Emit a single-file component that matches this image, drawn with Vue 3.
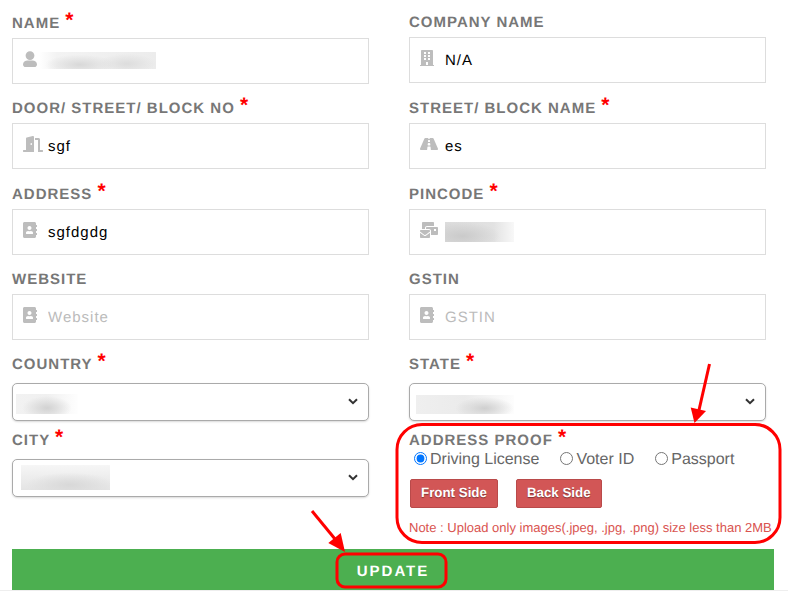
<script setup>
const icons = {
  user: { box: '0 0 14 16', w: 14, d: 'M7 0.2a4.4 4.4 0 1 1 0 8.8a4.4 4.4 0 1 1 0-8.8zM0 13.4C0 11 2.2 9.4 4.6 9.4h4.8C11.8 9.4 14 11 14 13.4c0 1.5-1.1 2.6-2.6 2.6H2.6C1.1 16 0 14.9 0 13.4z' },
  door: { box: '0 0 640 512', w: 20, d: 'M624 448h-80V113.45C544 86.19 522.47 64 496 64H384v64h96v384h144c8.84 0 16-7.16 16-16v-32c0-8.84-7.16-16-16-16zM312.24 1.01l-192 49.74C105.99 54.44 96 67.7 96 82.92V448H16c-8.84 0-16 7.16-16 16v32c0 8.84 7.16 16 16 16h336V33.18c0-21.58-19.56-37.41-39.76-32.17zM264 288c-13.25 0-24-14.33-24-32s10.75-32 24-32 24 14.33 24 32-10.75 32-24 32z' },
  book: { box: '0 0 448 512', w: 14, d: 'M436 160c6.6 0 12-5.4 12-12v-40c0-6.6-5.4-12-12-12h-20V48c0-26.5-21.5-48-48-48H48C21.5 0 0 21.5 0 48v416c0 26.5 21.5 48 48 48h320c26.5 0 48-21.5 48-48v-48h20c6.6 0 12-5.4 12-12v-40c0-6.6-5.4-12-12-12h-20v-64h20c6.6 0 12-5.4 12-12v-40c0-6.6-5.4-12-12-12h-20v-64h20zm-228-32c35.3 0 64 28.7 64 64s-28.7 64-64 64-64-28.7-64-64 28.7-64 64-64zm112 236.8c0 10.6-10 19.2-22.4 19.2H118.4C106 384 96 375.4 96 364.8v-19.2c0-31.8 30.1-57.6 67.2-57.6h5c12.3 5.1 25.7 8 39.8 8s27.6-2.9 39.8-8h5c37.1 0 67.2 25.8 67.2 57.6v19.2z' },
  building: { box: '0 0 448 512', w: 14, d: 'M436 480h-20V24c0-13.255-10.745-24-24-24H56C42.745 0 32 10.745 32 24v456H12c-6.627 0-12 5.373-12 12v20h448v-20c0-6.627-5.373-12-12-12zM128 76c0-6.627 5.373-12 12-12h40c6.627 0 12 5.373 12 12v40c0 6.627-5.373 12-12 12h-40c-6.627 0-12-5.373-12-12V76zm0 96c0-6.627 5.373-12 12-12h40c6.627 0 12 5.373 12 12v40c0 6.627-5.373 12-12 12h-40c-6.627 0-12-5.373-12-12v-40zm52 148h-40c-6.627 0-12-5.373-12-12v-40c0-6.627 5.373-12 12-12h40c6.627 0 12 5.373 12 12v40c0 6.627-5.373 12-12 12zm76 160h-64v-84c0-6.627 5.373-12 12-12h40c6.627 0 12 5.373 12 12v84zm64-172c0 6.627-5.373 12-12 12h-40c-6.627 0-12-5.373-12-12v-40c0-6.627 5.373-12 12-12h40c6.627 0 12 5.373 12 12v40zm0-96c0 6.627-5.373 12-12 12h-40c-6.627 0-12-5.373-12-12v-40c0-6.627 5.373-12 12-12h40c6.627 0 12 5.373 12 12v40zm0-96c0 6.627-5.373 12-12 12h-40c-6.627 0-12-5.373-12-12V76c0-6.627 5.373-12 12-12h40c6.627 0 12 5.373 12 12v40z' },
  road: { box: '0 0 576 512', w: 18, d: 'M573.19 402.67l-139.79-320C428.43 71.29 417.6 64 405.68 64h-97.59l2.45 23.16c.5 4.72-3.21 8.84-7.96 8.84h-29.16c-4.75 0-8.46-4.12-7.96-8.84L267.91 64h-97.59c-11.93 0-22.76 7.29-27.73 18.67L2.8 402.67C-6.45 423.86 8.31 448 30.54 448h196.84l10.31-97.68c.86-8.14 7.72-14.32 15.91-14.32h68.8c8.19 0 15.05 6.18 15.91 14.32L348.62 448h196.84c22.23 0 36.99-24.14 27.73-45.33zM260.4 135.16a8 8 0 0 1 7.96-7.16h39.29c4.09 0 7.53 3.09 7.96 7.16l4.6 43.58c.75 7.09-4.81 13.26-11.93 13.26h-40.54c-7.13 0-12.68-6.17-11.93-13.26l4.6-43.58zM315.64 304h-55.29c-9.5 0-16.91-8.23-15.91-17.68l5.07-48c.86-8.14 7.72-14.32 15.91-14.32h45.15c8.19 0 15.05 6.18 15.91 14.32l5.07 48c1 9.45-6.41 17.68-15.91 17.68z' },
  mail: { box: '0 0 576 512', w: 18, d: 'M160 448c-25.6 0-51.2-22.4-64-32-64-44.8-83.2-60.8-96-70.4V480c0 17.67 14.33 32 32 32h256c17.67 0 32-14.33 32-32V345.6c-12.8 9.6-32 25.6-96 70.4-12.8 9.6-38.4 32-64 32zm128-192H32c-17.67 0-32 14.33-32 32v16c25.6 19.2 22.4 19.2 115.2 86.4 9.6 6.4 28.8 25.6 44.8 25.6s35.2-19.2 44.8-22.4c92.8-67.2 89.6-67.2 115.2-86.4V288c0-17.67-14.33-32-32-32zm256-96H224c-17.67 0-32 14.33-32 32v32h96c33.21 0 60.59 25.42 63.71 57.82l.29-.22V416h192c17.67 0 32-14.33 32-32V192c0-17.67-14.33-32-32-32zm-32 128h-64v-64h64v64zm-352-96c0-35.29 28.71-64 64-64h224V32c0-17.67-14.33-32-32-32H96C78.33 0 64 14.33 64 32v192h96v-32z' }
}
const leftFields = [
  { label: 'NAME', req: true, icon: 'user', value: '', blur: 'blur-name' },
  { label: 'DOOR/ STREET/ BLOCK NO', req: true, icon: 'door', value: 'sgf' },
  { label: 'ADDRESS', req: true, icon: 'book', value: 'sgfdgdg' },
  { label: 'WEBSITE', icon: 'book', value: '', placeholder: 'Website' }
]
const rightFields = [
  { label: 'COMPANY NAME', icon: 'building', value: 'N/A' },
  { label: 'STREET/ BLOCK NAME', req: true, icon: 'road', value: 'es' },
  { label: 'PINCODE', req: true, icon: 'mail', value: '', blur: 'blur-pin' },
  { label: 'GSTIN', icon: 'book', value: '', placeholder: 'GSTIN' }
]
</script>

<template>
  <div class="page">
    <div class="columns">
      <div class="col">
        <div v-for="f in leftFields" :key="f.label" class="field">
          <div class="label">{{ f.label }} <span v-if="f.req" class="req">*</span></div>
          <div class="box">
            <svg class="icon" :viewBox="icons[f.icon].box" :width="icons[f.icon].w" height="16"><path :d="icons[f.icon].d" /></svg>
            <input class="input" type="text" :value="f.value" :placeholder="f.placeholder" />
            <div v-if="f.blur" class="blur" :class="f.blur"></div>
          </div>
        </div>
        <div class="label label-sel first-sel">COUNTRY <span class="req">*</span></div>
        <div class="sel-wrap">
          <select class="sel"><option></option></select>
          <svg class="chev" width="10" height="7" viewBox="0 0 10 7"><path d="M1 1.2 L5 5.2 L9 1.2" /></svg>
          <div class="blur blur-country"></div>
        </div>
        <div class="label label-sel">CITY <span class="req">*</span></div>
        <div class="sel-wrap">
          <select class="sel"><option></option></select>
          <svg class="chev" width="10" height="7" viewBox="0 0 10 7"><path d="M1 1.2 L5 5.2 L9 1.2" /></svg>
          <div class="blur blur-city"></div>
        </div>
      </div>
      <div class="col col-right">
        <div v-for="f in rightFields" :key="f.label" class="field">
          <div class="label">{{ f.label }} <span v-if="f.req" class="req">*</span></div>
          <div class="box">
            <svg class="icon" :viewBox="icons[f.icon].box" :width="icons[f.icon].w" height="16"><path :d="icons[f.icon].d" /></svg>
            <input class="input" type="text" :value="f.value" :placeholder="f.placeholder" />
            <div v-if="f.blur" class="blur" :class="f.blur"></div>
          </div>
        </div>
        <div class="label label-sel first-sel">STATE <span class="req">*</span></div>
        <div class="sel-wrap">
          <select class="sel"><option></option></select>
          <svg class="chev" width="10" height="7" viewBox="0 0 10 7"><path d="M1 1.2 L5 5.2 L9 1.2" /></svg>
          <div class="blur blur-state"></div>
        </div>
        <div class="label proof-label">ADDRESS PROOF <span class="req">*</span></div>
        <div class="radios">
          <label class="radio"><input type="radio" name="proof" checked />Driving License</label>
          <label class="radio"><input type="radio" name="proof" />Voter ID</label>
          <label class="radio"><input type="radio" name="proof" />Passport</label>
        </div>
        <div class="uploads">
          <button class="upload" type="button">Front Side</button>
          <button class="upload" type="button">Back Side</button>
        </div>
        <p class="note">Note : Upload only images(.jpeg, .jpg, .png) size less than 2MB</p>
      </div>
    </div>
    <button class="update" type="button">UPDATE</button>
    <div class="rule"></div>
    <svg class="marks" width="788" height="591" viewBox="0 0 788 591" fill="none">
      <rect x="397" y="424.5" width="383" height="118" rx="25" stroke="#f00" stroke-width="3" />
      <rect x="337" y="554" width="109" height="33" rx="8" stroke="#f00" stroke-width="3" />
      <path d="M709.5 364 L699 410" stroke="#f00" stroke-width="3" />
      <path d="M690.7 407.5 L706 411 L694.5 423 Z" fill="#f00" />
      <path d="M312 511 L335 539" stroke="#f00" stroke-width="3" />
      <path d="M328.3 543 L340.7 533 L345 552 Z" fill="#f00" />
    </svg>
  </div>
</template>

<style>
html, body { margin: 0; overflow: hidden; background: #fff; }
</style>

<style scoped>
.page {
  position: relative;
  width: 788px;
  height: 591px;
  overflow: hidden;
  font-family: "Liberation Sans", Arial, sans-serif;
  text-rendering: geometricPrecision;
}
.columns {
  display: flex;
  gap: 40px;
  padding: 0 12px;
  height: 549px;
}
.col { width: 357px; }
.col-right { margin-top: -0.1px; }
.field { margin-bottom: 2.1px; }
.label {
  display: flex;
  align-items: flex-end;
  height: 37.5px;
  box-sizing: border-box;
  padding-bottom: 6px;
  font-size: 15px;
  line-height: 17px;
  font-weight: 700;
  letter-spacing: 1px;
  color: #777;
  white-space: pre;
}
.req {
  position: relative;
  top: -3px;
  color: #f00;
  font-size: 21px;
  line-height: 17px;
  letter-spacing: 0;
}
.label-sel { height: 38px; padding-bottom: 10px; }
.first-sel { height: 40.6px; }
.box { position: relative; height: 46px; }
.input {
  display: block;
  width: 100%;
  height: 46px;
  box-sizing: border-box;
  border: 1px solid #ddd;
  padding: 1px 10px 0 35px;
  outline: none;
  background: #fff;
  font: 15px "Liberation Sans", Arial, sans-serif;
  letter-spacing: 1px;
  color: #000;
  text-rendering: geometricPrecision;
}
.input::placeholder { color: #bbb; opacity: 1; }
.icon {
  position: absolute;
  left: 11px;
  top: 13px;
  fill: #bdbdbd;
}
.blur { position: absolute; pointer-events: none; }
.blur-name {
  left: 27px; top: 14px; width: 117px; height: 17px;
  background:
    radial-gradient(ellipse 30% 60% at 35% 75%, #d8d8d8, transparent),
    radial-gradient(ellipse 25% 60% at 75% 70%, #dcdcdc, transparent),
    linear-gradient(90deg, #fff 0%, #f3f3f3 15%, #ececec 100%);
}
.blur-pin {
  left: 36px; top: 13px; width: 69px; height: 20px;
  background:
    radial-gradient(ellipse 55% 70% at 25% 70%, #cacaca, transparent),
    linear-gradient(90deg, #dcdcdc 0%, #e2e2e2 70%, #f8f8f8 100%);
}
.sel-wrap { position: relative; height: 38px; }
.sel {
  display: block;
  appearance: none;
  width: 100%;
  height: 38px;
  box-sizing: border-box;
  border: 1px solid #aaa;
  border-radius: 5px;
  background-color: #fff;
  box-shadow: 0 1px 2px rgba(0, 0, 0, 0.15);
  font: 15px "Liberation Sans", Arial, sans-serif;
  outline: none;
}
.chev {
  position: absolute;
  left: 336px;
  top: 15px;
  fill: none;
  stroke: #333;
  stroke-width: 2;
  pointer-events: none;
}
.blur-country {
  left: 4px; top: 11px; width: 62px; height: 20px;
  background:
    radial-gradient(ellipse 40% 60% at 50% 70%, #d2d2d2, transparent),
    linear-gradient(90deg, #f2f2f2 0%, #f0f0f0 50%, #fefefe 100%);
}
.blur-city {
  left: 9px; top: 6px; width: 89px; height: 25px;
  background:
    radial-gradient(ellipse 50% 50% at 55% 80%, #d8d8d8, transparent),
    linear-gradient(180deg, #f6f6f6 0%, #e4e4e4 100%);
}
.blur-state {
  left: 7px; top: 12px; width: 98px; height: 19px;
  background:
    radial-gradient(ellipse 30% 60% at 70% 70%, #cfcfcf, transparent),
    linear-gradient(90deg, #efefef 0%, #ebebeb 50%, #fdfdfd 100%);
}
.proof-label { height: 28px; padding-bottom: 0; }
.radios {
  display: flex;
  gap: 21px;
  padding: 2px 0 0 5px;
  height: 19px;
}
.radio {
  display: inline-flex;
  align-items: center;
  gap: 3px;
  font-size: 16px;
  line-height: 20px;
  color: #666;
}
.radio input { margin: 0; width: 13px; height: 13px; position: relative; top: -2px; }
.uploads {
  display: flex;
  gap: 18px;
  padding-left: 1px;
  margin-top: 9px;
}
.upload {
  height: 29px;
  padding: 0 10px 2px;
  border: 1px solid #b94a4a;
  border-radius: 2px;
  background: #d25656;
  color: #fff;
  font: 700 13.33px "Liberation Sans", Arial, sans-serif;
  text-shadow: 0 1px 1px rgba(0, 0, 0, 0.4);
  text-rendering: geometricPrecision;
}
.note {
  margin: 12px 0 0;
  font-size: 13px;
  line-height: 16px;
  color: #d9534f;
  white-space: nowrap;
}
.update {
  display: block;
  width: 762px;
  height: 41px;
  margin-left: 12px;
  padding: 4px 0 0;
  border: 0;
  background: #4caf50;
  color: #fff;
  font: 700 15px "Liberation Sans", Arial, sans-serif;
  letter-spacing: 2px;
  text-align: center;
  text-rendering: geometricPrecision;
}
.rule { height: 1px; background: #eee; }
.marks { position: absolute; left: 0; top: 0; pointer-events: none; }
</style>
